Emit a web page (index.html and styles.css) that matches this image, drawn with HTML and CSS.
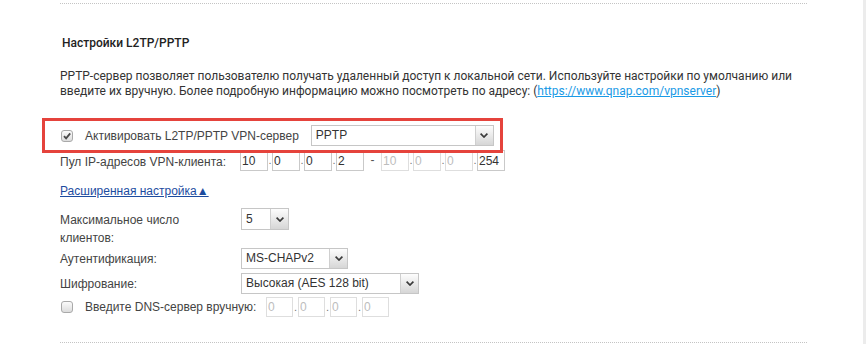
FILE: index.html
```html
<!DOCTYPE html>
<html>
<head>
    <title>L2TP/PPTP</title>
    <link rel="stylesheet" href="styles.css">
</head>
<body>
    <div class="page">
        <div class="divider"></div>
        <h2 class="title">Настройки L2TP/PPTP</h2>
        <p class="intro">PPTP-сервер позволяет пользователю получать удаленный доступ к локальной сети. Используйте настройки по умолчанию или введите их вручную. Более подробную информацию можно посмотреть по адресу: (<a href="#">https://www.qnap.com/vpnserver</a>)</p>

        <div class="enable-row">
            <span class="check checked">
                <svg width="12" height="12" viewBox="0 0 12 12"><path d="M3 6.2 L5.1 8.4 L9.2 3.4" fill="none" stroke="#4a4a4a" stroke-width="1.8"/></svg>
            </span>
            <span class="enable-label">Активировать L2TP/PPTP VPN-сервер</span>
            <div class="select select-wide">
                <span class="select-value">PPTP</span>
                <span class="select-arrow"><svg width="8" height="5" viewBox="0 0 8 5"><path d="M0.6 0.6 L4 4 L7.4 0.6" fill="none" stroke="#3a3a3a" stroke-width="1.7"/></svg></span>
            </div>
        </div>

        <div class="pool-row">
            <span class="pool-label">Пул IP-адресов VPN-клиента:</span>
            <div class="ip-group">
                <input class="ip-box" value="10"><span class="ip-dot">.</span>
                <input class="ip-box" value="0"><span class="ip-dot">.</span>
                <input class="ip-box" value="0"><span class="ip-dot">.</span>
                <input class="ip-box" value="2">
                <span class="ip-dash">-</span>
                <input class="ip-box off" value="10" disabled><span class="ip-dot">.</span>
                <input class="ip-box off" value="0" disabled><span class="ip-dot">.</span>
                <input class="ip-box off" value="0" disabled><span class="ip-dot">.</span>
                <input class="ip-box" value="254">
            </div>
        </div>

        <a class="advanced" href="#">Расширенная настройка▲</a>

        <div class="form">
            <div class="form-row first">
                <span class="form-label">Максимальное число клиентов:</span>
                <div class="select select-small">
                    <span class="select-value">5</span>
                    <span class="select-arrow"><svg width="8" height="5" viewBox="0 0 8 5"><path d="M0.6 0.6 L4 4 L7.4 0.6" fill="none" stroke="#3a3a3a" stroke-width="1.7"/></svg></span>
                </div>
            </div>
            <div class="form-row">
                <span class="form-label">Аутентификация:</span>
                <div class="select select-mid">
                    <span class="select-value">MS-CHAPv2</span>
                    <span class="select-arrow"><svg width="8" height="5" viewBox="0 0 8 5"><path d="M0.6 0.6 L4 4 L7.4 0.6" fill="none" stroke="#3a3a3a" stroke-width="1.7"/></svg></span>
                </div>
            </div>
            <div class="form-row">
                <span class="form-label">Шифрование:</span>
                <div class="select select-enc">
                    <span class="select-value">Высокая (AES 128 bit)</span>
                    <span class="select-arrow"><svg width="8" height="5" viewBox="0 0 8 5"><path d="M0.6 0.6 L4 4 L7.4 0.6" fill="none" stroke="#3a3a3a" stroke-width="1.7"/></svg></span>
                </div>
            </div>
            <div class="dns-row">
                <span class="check"></span>
                <span class="dns-label">Введите DNS-сервер вручную:</span>
                <div class="ip-group dns">
                    <input class="ip-box off" value="0" disabled><span class="ip-dot">.</span>
                    <input class="ip-box off" value="0" disabled><span class="ip-dot">.</span>
                    <input class="ip-box off" value="0" disabled><span class="ip-dot">.</span>
                    <input class="ip-box off" value="0" disabled>
                </div>
            </div>
        </div>

        <div class="divider bottom"></div>
    </div>
</body>
</html>
```

FILE: styles.css
```css
html {
    background: #fff;
}
body {
    margin: 0;
    min-height: 344px;
    box-sizing: border-box;
    border-right: 3px solid #ececec;
    font-family: Roboto, "Liberation Sans", sans-serif;
    font-size: 12px;
    color: #333;
}
.page {
    margin-left: 60px;
    width: 747px;
    padding-top: 3px;
}
.divider {
    border-top: 1px dotted #c4c4c4;
}
.divider.bottom {
    margin-top: 25px;
}
.title {
    margin: 31px 0 0 2px;
    font-size: 12px;
    font-weight: 500;
    line-height: 16px;
    color: #222;
}
.intro {
    margin: 18px 0 0;
    line-height: 15px;
    color: #333;
}
.intro a {
    color: #1a9ae6;
}

/* red highlight round the enable row */
.enable-row {
    display: flex;
    align-items: center;
    margin: 22px 0 0 -15px;
    width: 455px;
    height: 29px;
    box-sizing: border-box;
    padding-left: 16px;
    outline: 3px solid #e5433c;
    font-family: "Liberation Sans", Arial, sans-serif;
    font-size: 12px;
    color: #444;
}
.enable-label {
    margin-left: 12px;
}
.check {
    display: inline-block;
    width: 12px;
    height: 12px;
    box-sizing: border-box;
    border: 1px solid #a9a9a9;
    border-radius: 3px;
    background: linear-gradient(#fbfbfb, #dcdcdc);
    flex-shrink: 0;
}
.check svg {
    display: block;
    margin: -1px;
}

.select {
    display: flex;
    height: 21px;
    box-sizing: border-box;
    border: 1px solid #c6c6c6;
    background: #fff;
    font-family: "Liberation Sans", Arial, sans-serif;
    font-size: 12px;
    color: #333;
}
.select-value {
    flex: 1;
    padding-left: 4px;
    line-height: 19px;
    white-space: nowrap;
}
.select-arrow {
    display: flex;
    align-items: center;
    justify-content: center;
    width: 17px;
    border-left: 1px solid #cfcfcf;
    background: linear-gradient(#fdfdfd, #d6d6d6);
}
.select-wide {
    margin-left: 12px;
    width: 183px;
}
.select-small {
    width: 48px;
    height: 22px;
}
.select-small .select-value {
    line-height: 20px;
}
.select-mid {
    width: 107px;
}
.select-enc {
    width: 178px;
}

.pool-row {
    display: flex;
    align-items: center;
    height: 21px;
    font-family: "Liberation Sans", Arial, sans-serif;
    font-size: 12px;
    color: #444;
}
.pool-label {
    width: 180px;
    padding-top: 3px;
}
.ip-group {
    display: flex;
    align-items: stretch;
}
.ip-box {
    width: 28px;
    height: 21px;
    box-sizing: border-box;
    margin: 0;
    padding: 0 1px;
    border: 1px solid #c9c9c9;
    border-radius: 0;
    background: #fff;
    font-family: "Liberation Sans", Arial, sans-serif;
    font-size: 12px;
    color: #333;
    outline: none;
}
.ip-box.off {
    color: #bdbdbd;
    border-color: #dedede;
}
.ip-dot {
    width: 4px;
    line-height: 20px;
    font-size: 11px;
    color: #777;
    text-align: center;
}
.ip-dash {
    width: 17px;
    text-align: center;
    line-height: 21px;
    color: #555;
}

.advanced {
    display: inline-block;
    margin-top: 12px;
    line-height: 16px;
    font-family: "Liberation Sans", Arial, sans-serif;
    font-size: 12px;
    color: #1d4c9f;
}

.form {
    margin-top: 9px;
    font-family: "Liberation Sans", Arial, sans-serif;
    font-size: 12px;
    color: #444;
}
.form-row {
    display: flex;
    align-items: center;
    margin-top: 4px;
}
.form-row.first {
    align-items: flex-start;
    margin-top: 0;
    margin-bottom: -3px;
}
.form-label {
    width: 181px;
    line-height: 18px;
}
.form-row.first .form-label {
    width: 150px;
    margin-right: 31px;
    padding-top: 3px;
}
.dns-row {
    display: flex;
    align-items: center;
    margin-top: 3px;
    padding-left: 1px;
}
.dns-label {
    width: 181px;
    margin-left: 12px;
}
.ip-group.dns .ip-box {
    width: 27px;
    height: 20px;
}
.ip-group.dns .ip-dot {
    width: 5px;
}
```
